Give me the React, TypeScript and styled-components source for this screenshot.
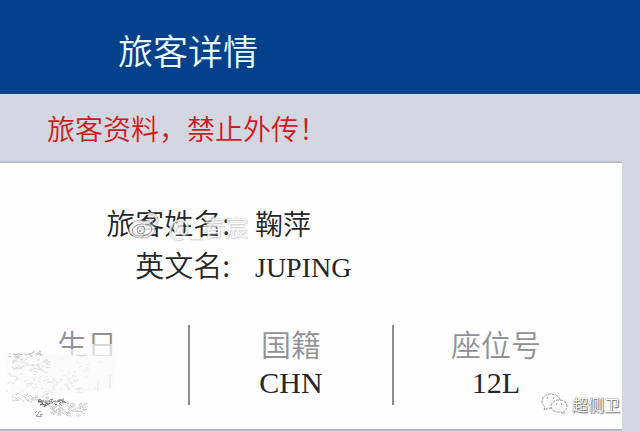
import React from 'react';
import styled, { createGlobalStyle } from 'styled-components';

const sans = '"Noto Sans CJK SC", sans-serif';
const mixed = '"Liberation Serif", "Noto Sans CJK SC", serif';

const GlobalStyle = createGlobalStyle`
  * { box-sizing: border-box; }
  body { margin: 0; background: #d3d7e2; color: #262628; font-family: ${sans}; }
  h1, p, dl, dt, dd { margin: 0; font-weight: 350; }
`;

const Header = styled.header`
  display: flex;
  align-items: center;
  height: 94px;
  padding: 6px 0 0 118px;
  background: #05418a;
  border-bottom: 1px solid #1d4673;
`;

const Title = styled.h1`
  color: #e9fbfa;
  font-size: 35px;
  line-height: 48px;
`;

const Notice = styled.p`
  padding: 14px 0 13px 47px;
  color: #d21a22;
  font-size: 28px;
  line-height: 40px;
`;

const Card = styled.main`
  position: relative;
  margin-right: 18px;
  padding-top: 38px;
  background: #fefefe;
  border-top: 2px solid #bcbcc4;
  border-bottom: 2px solid #b9b9bd;
`;

const Details = styled.dl`
  position: relative;
  display: grid;
  grid-template-columns: 230px 1fr;
  grid-auto-rows: 42px;
  column-gap: 25px;
  align-items: baseline;
  font-size: 29px;
  line-height: 42px;
`;

const DetailLabel = styled.dt`
  text-align: right;
`;

const DetailValue = styled.dd`
  font-family: ${mixed};
  font-size: 28px;
`;

const Facts = styled.dl`
  display: grid;
  grid-template-columns: 190fr 204fr 228fr;
  padding: 40px 0 24px;
`;

const Fact = styled.div<{ $divided?: boolean; $inset?: number }>`
  position: relative;
  height: 80px;
  padding-right: ${({ $inset = 0 }) => $inset}px;
  border-right: ${({ $divided }) => ($divided ? '2px solid #8d8d91' : '0')};
  text-align: center;
`;

const FactLabel = styled.dt`
  color: #929296;
  font-size: 30px;
  line-height: 36px;
`;

const FactValue = styled.dd`
  font-family: ${mixed};
  font-size: 30px;
  line-height: 44px;
`;

const Smudge = styled.svg`
  position: absolute;
  left: 0;
  top: 12px;
`;

const Mark = styled.div`
  position: absolute;
  left: 128px;
  top: 8px;
  display: flex;
  align-items: center;
  gap: 8px;
  color: #fbfbfb;
  font-size: 23px;
  line-height: 34px;
  text-shadow: 0 0 1px #aaa, 1px 1px 1px #ccc;
  opacity: 0.85;
`;

const Credit = styled.div`
  position: absolute;
  right: 2px;
  bottom: 12px;
  display: flex;
  align-items: center;
  gap: 4px;
  color: #fafafa;
  font-size: 16px;
  line-height: 26px;
  text-shadow: 0 0 1px #444, 1px 1px 1px #777;
`;

const WeiboIcon = () => (
  <svg width="32" height="28" viewBox="0 0 32 28" fill="none" aria-hidden="true">
    <path d="M12 8C7 8 1 13 1 18c0 5 6 8 13 8s13-4 13-9c0-3-3-4-5-5 1-3-1-5-7-2 0-1-1-2-3-2Z" fill="#fcfcfc" stroke="#a2a2a2" />
    <ellipse cx="14" cy="18" rx="10" ry="6" stroke="#8b8b8b" transform="rotate(-8 14 18)" />
    <circle cx="13" cy="18" r="4" stroke="#999" />
    <circle cx="12" cy="19" r="1" fill="#777" />
    <path d="M21 2c5-1 9 3 8 9" stroke="#bbb" strokeWidth="3" strokeLinecap="round" />
    <path d="M21 2c5-1 9 3 8 9" stroke="#fff" strokeLinecap="round" />
    <path d="M21 7c2 0 4 1 3 4" stroke="#bbb" strokeLinecap="round" />
  </svg>
);

const WechatIcon = () => (
  <svg width="27" height="22" viewBox="0 0 27 22" fill="#fdfdfd" stroke="#999" strokeDasharray="3 1" aria-hidden="true">
    <path d="M10 1C5 1 1 4 1 8c0 3 1 4 3 6l-1 3 4-2c7 1 12-2 12-7 0-4-4-7-9-7Z" />
    <path d="M18 7c-5 0-8 3-8 6 0 4 4 7 10 6l3 2v-3c2-1 3-3 3-5 0-3-3-6-8-6Z" />
    <path d="M6 5h1M12 5h1M15 11h1M20 11h1" stroke="#666" strokeDasharray="none" />
  </svg>
);

/* Repeatable pseudo-random eraser strokes. */
const scribble = (x: number, y: number, w: number, h: number, count: number, seed: number) => {
  let s = seed;
  const next = () => {
    s = (s * 16807) % 2147483647;
    return s / 2147483647;
  };
  let d = '';
  for (let i = 0; i < count; i += 1) {
    const px = Math.round(x + next() * w);
    const py = Math.round(y + next() * h);
    d += `M${px} ${py}l${Math.round(1 + next() * 2)} ${Math.round(next() * 4 - 2)}l1 ${Math.round(next() * 2 - 1)}`;
  }
  return d;
};

const EraserSmudge = () => (
  <Smudge width="124" height="82" viewBox="0 0 124 82" fill="none" aria-hidden="true">
    <path d="M56 12L90 12 90 7 116 7 120 20 56 30Z" fill="#fdfdfd" opacity=".65" />
    <path d="M4 17L116 19 114 50 84 56 10 56Z" fill="#fbfbfb" />
    <path d={scribble(8, 16, 32, 3, 30, 91)} stroke="#ccc" />
    <path d="M76 18l6 1 4-1" stroke="#ccc" />
    <path d={scribble(12, 21, 36, 13, 50, 17)} stroke="#ddd" />
    <path d={scribble(6, 36, 74, 20, 60, 53)} stroke="#e5e5e5" />
    <path d={scribble(54, 22, 54, 32, 36, 29)} stroke="#f0f0f0" />
    <path d={scribble(12, 58, 34, 6, 30, 67)} stroke="#d0d0d0" />
    <path d={scribble(38, 63, 26, 3, 38, 11)} stroke="#8a8a8a" />
    <path d={scribble(48, 66, 36, 12, 90, 39)} stroke="#d0d0d0" />
    <path d={scribble(35, 76, 6, 3, 8, 77)} stroke="#a0a0a0" />
    <path d="M38 64l5 2-3 2 6-1-2 3 6-4" stroke="#666" />
    <path d="M110 38v14M98 46v8" stroke="#e0e0e0" />
  </Smudge>
);

const details = [
  { label: '旅客姓名:', value: '鞠萍' },
  { label: '英文名:', value: 'JUPING' },
];

export default function App() {
  return (
    <>
      <GlobalStyle />
      <Header>
        <Title>旅客详情</Title>
      </Header>
      <Notice>旅客资料，禁止外传！</Notice>
      <Card>
        <Details>
          {details.map(({ label, value }) => (
            <React.Fragment key={label}>
              <DetailLabel>{label}</DetailLabel>
              <DetailValue>{value}</DetailValue>
            </React.Fragment>
          ))}
          <Mark>
            <WeiboIcon />
            <span>@_春宸</span>
          </Mark>
        </Details>
        <Facts>
          <Fact $divided $inset={14}>
            <FactLabel>生日</FactLabel>
            <EraserSmudge />
          </Fact>
          <Fact $divided>
            <FactLabel>国籍</FactLabel>
            <FactValue>CHN</FactValue>
          </Fact>
          <Fact $inset={24}>
            <FactLabel>座位号</FactLabel>
            <FactValue>12L</FactValue>
          </Fact>
        </Facts>
        <Credit>
          <WechatIcon />
          <span>超侧卫</span>
        </Credit>
      </Card>
    </>
  );
}
